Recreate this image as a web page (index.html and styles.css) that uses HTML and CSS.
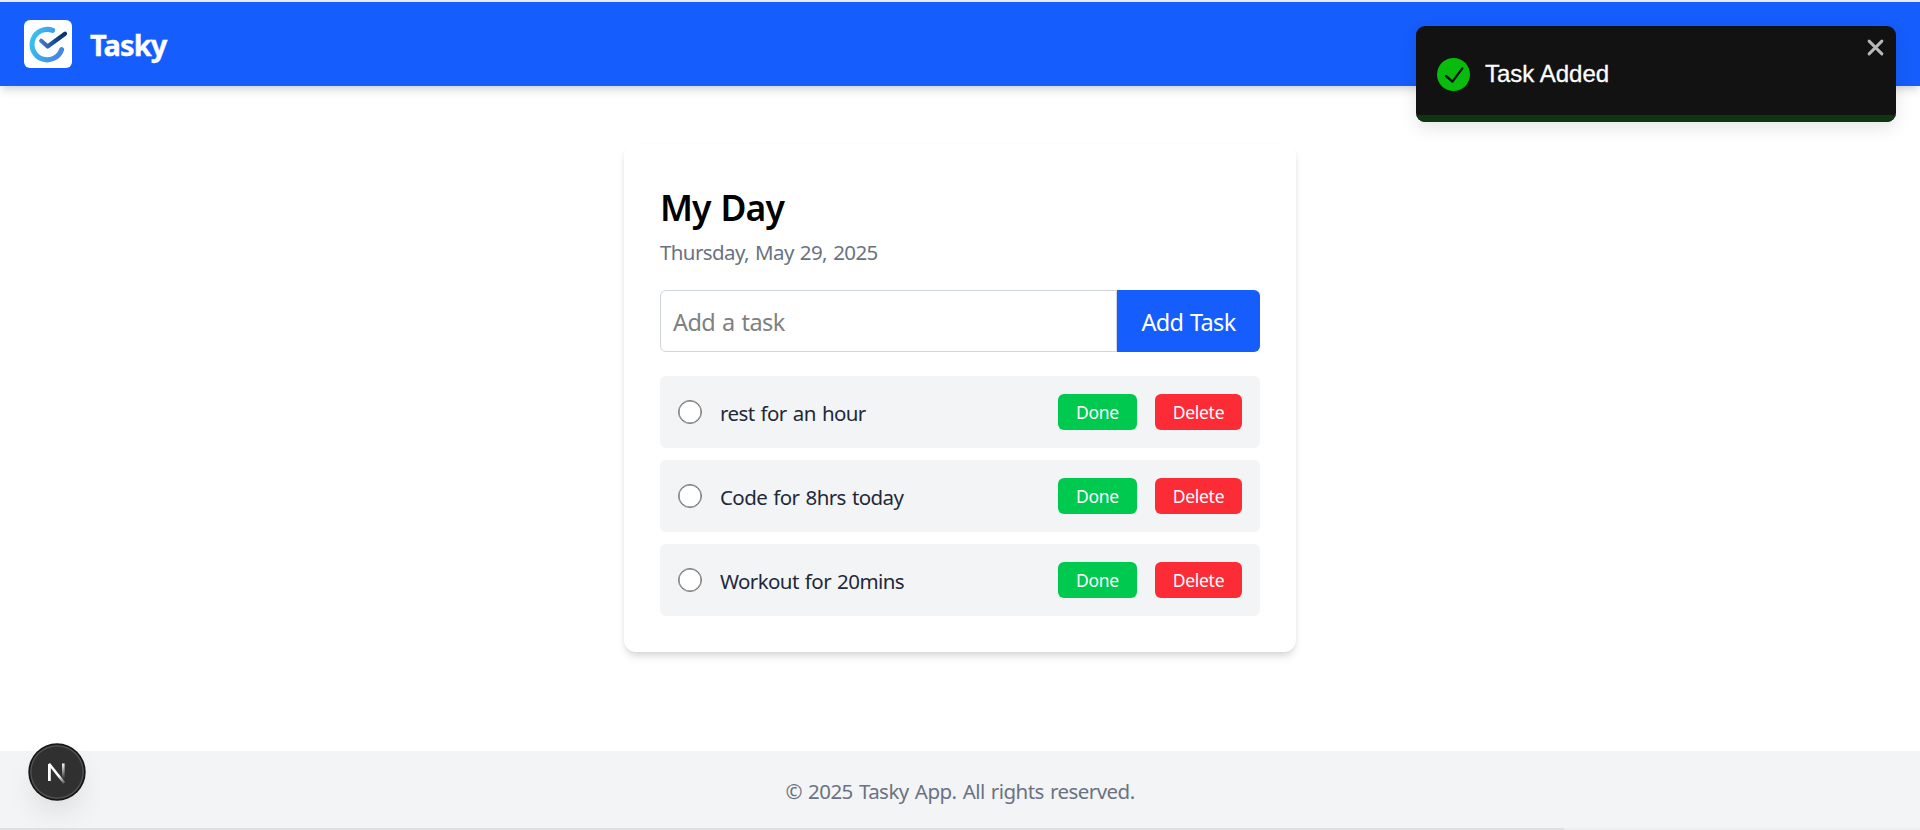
FILE: index.html
```html
<!DOCTYPE html>
<html lang="en">
<head>
<meta charset="utf-8">
<title>Tasky</title>
<link rel="stylesheet" href="styles.css">
</head>
<body>
<div class="page">
  <header class="header">
    <svg class="logo" viewBox="0 0 48 48" fill="none" stroke-linecap="round">
      <defs>
        <linearGradient id="ring" x1="5" y1="20" x2="40" y2="32" gradientUnits="userSpaceOnUse"><stop stop-color="#36c4f2"/><stop offset="1" stop-color="#4381e6"/></linearGradient>
        <linearGradient id="tick" x1="17" y1="22" x2="41" y2="15" gradientUnits="userSpaceOnUse"><stop stop-color="#4077d4"/><stop offset=".6" stop-color="#164684"/><stop offset="1" stop-color="#0c326a"/></linearGradient>
      </defs>
      <path d="M28.6 10.4A15.2 15.2 0 1 0 37.6 29.6" stroke="url(#ring)" stroke-width="5"/>
      <path d="M17.2 20.8L23.6 26.5L41 13.8" stroke="url(#tick)" stroke-width="4.2" stroke-linejoin="round"/>
    </svg>
    <h1 class="brand">Tasky</h1>
  </header>

  <main class="main">
    <section class="card">
      <h2 class="title">My Day</h2>
      <p class="date">Thursday, May 29, 2025</p>
      <div class="form">
        <input class="field" type="text" placeholder="Add a task">
        <button class="add">Add Task</button>
      </div>
      <ul class="list">
        <li class="task"><span class="radio"></span><span class="name">rest for an hour</span><button class="btn done">Done</button><button class="btn delete">Delete</button></li>
        <li class="task"><span class="radio"></span><span class="name">Code for 8hrs today</span><button class="btn done">Done</button><button class="btn delete">Delete</button></li>
        <li class="task"><span class="radio"></span><span class="name">Workout for 20mins</span><button class="btn done">Done</button><button class="btn delete">Delete</button></li>
      </ul>
    </section>
  </main>

  <footer class="footer"><p class="copy">© 2025 Tasky App. All rights reserved.</p></footer>
  <div class="scrollbar"><div class="thumb"></div></div>
</div>

<div class="toast">
  <div class="toast-body">
    <svg class="toast-icon" viewBox="0 0 33 33"><circle cx="16.5" cy="16.5" r="16.5" fill="#07bc0c"/><path d="M9 18L15.5 23.6L25.3 10.4" fill="none" stroke="#121212" stroke-width="2.4" stroke-linecap="round" stroke-linejoin="round"/></svg>
    <span class="toast-text">Task Added</span>
  </div>
  <svg class="toast-close" viewBox="0 0 16 16"><path d="M2 2L14 14M14 2L2 14" stroke="#b8b8b8" stroke-width="2.8" stroke-linecap="round"/></svg>
  <div class="progress"></div>
</div>

<div class="devtool">
  <svg class="n-icon" viewBox="0 0 20 24" fill="none">
    <defs>
      <linearGradient id="stem" x1="0" y1="2" x2="0" y2="18" gradientUnits="userSpaceOnUse"><stop stop-color="#fff"/><stop offset="1" stop-color="#fff" stop-opacity="0"/></linearGradient>
      <linearGradient id="diag" x1="12" y1="15" x2="17.5" y2="22.5" gradientUnits="userSpaceOnUse"><stop stop-color="#fff"/><stop offset="1" stop-color="#fff" stop-opacity=".15"/></linearGradient>
    </defs>
    <path d="M2.4 20V3" stroke="#fff" stroke-width="2.8"/>
    <path d="M2 2.8L17.3 22" stroke="url(#diag)" stroke-width="2.6"/>
    <path d="M16.3 2.5V18" stroke="url(#stem)" stroke-width="2.6"/>
  </svg>
</div>
</body>
</html>
```
FILE: styles.css
```css
* { box-sizing: border-box; margin: 0; padding: 0; }
body {
  font-family: "Segoe UI", "Noto Sans", "Open Sans", sans-serif;
  background: #fff;
  overflow: hidden;
}
.page { display: flex; flex-direction: column; height: 830px; border-top: 2px solid #e9ebf2; }
.header {
  display: flex; align-items: center; gap: 18px; flex: none;
  height: 84px; padding: 0 24px; background: #155dfc;
  box-shadow: 0 6px 9px -1px rgba(0,0,0,.1), 0 3px 6px -2px rgba(0,0,0,.1);
}
.logo { width: 48px; height: 48px; border-radius: 6px; background: #fff; }
.brand { padding-top: 2px; color: #fff; font-size: 29px; line-height: 42px; font-weight: 700; letter-spacing: -.9px; -webkit-text-stroke: .4px #fff; }
.main { flex: 1; display: flex; justify-content: center; align-items: flex-start; padding-top: 58px; }
.card {
  width: 672px; height: 508px; padding: 36px; border-radius: 12px; background: #fff;
  box-shadow: 0 6px 9px -1px rgba(0,0,0,.1), 0 3px 6px -2px rgba(0,0,0,.1);
}
.title { font-size: 35.5px; line-height: 54px; font-weight: 600; letter-spacing: -.9px; word-spacing: 1.5px; color: #000; }
.date { margin-top: 2px; font-size: 20.5px; line-height: 32px; letter-spacing: -.6px; word-spacing: 1.4px; color: #6a7282; }
.form { display: flex; height: 62px; margin-top: 22px; }
.field {
  width: 457px; padding: 2px 12px 0; border: 1px solid #d1d5dc; border-radius: 6px 0 0 6px;
  font: 23.5px "Segoe UI", "Noto Sans", sans-serif; letter-spacing: -.6px; word-spacing: 1.4px; outline: none;
}
.field::placeholder { color: #808080; }
.add {
  flex: 1; border: 0; border-radius: 0 6px 6px 0; background: #155dfc; color: #fff;
  padding-top: 2px; font: 23.5px "Segoe UI", "Noto Sans", sans-serif; letter-spacing: -.7px; word-spacing: 1.4px; white-space: nowrap;
}
.list { display: flex; flex-direction: column; gap: 12px; margin-top: 24px; list-style: none; }
.task { display: flex; align-items: center; height: 72px; padding: 0 18px; border-radius: 6px; background: #f3f4f6; }
.radio { width: 24px; height: 24px; border: 1px solid #767676; border-radius: 50%; background: #fff; box-shadow: inset 0 0 0 .5px #767676; }
.name { flex: 1; margin-left: 18px; padding-top: 2px; font-size: 20.5px; line-height: 32px; letter-spacing: -.6px; word-spacing: 1.4px; color: #1e2939; white-space: nowrap; }
.btn {
  height: 36px; border: 0; border-radius: 6px; color: #fff; padding-bottom: 1px;
  font: 17.5px "Segoe UI", "Noto Sans", sans-serif; letter-spacing: -.3px;
}
.done { width: 79px; margin-right: 18px; background: #00c950; }
.delete { width: 87px; background: #fb2c36; }
.footer { display: flex; align-items: center; justify-content: center; height: 77px; flex: none; padding-top: 3px; background: #f3f4f6; }
.copy { font-size: 20.5px; line-height: 32px; letter-spacing: -.55px; word-spacing: 1.4px; color: #6a7282; white-space: nowrap; }
.scrollbar { height: 2px; flex: none; background: #efefef; }
.thumb { width: 1564px; height: 2px; background: #e0e0e0; }
.toast {
  position: absolute; left: 1416px; top: 26px; width: 480px; height: 96px;
  border-radius: 9px; background: #121212; overflow: hidden;
  box-shadow: 0 6px 18px rgba(0,0,0,.1);
}
.toast-body { display: flex; align-items: center; gap: 15px; height: 96px; padding: 0 21px; }
.toast-icon { width: 33px; height: 33px; }
.toast-text { color: #fff; font: 24px "Liberation Sans", Arial, sans-serif; -webkit-text-stroke: .3px #fff; }
.toast-close { position: absolute; right: 12px; top: 13px; width: 17px; height: 17px; }
.progress { position: absolute; left: 0; bottom: 0; width: 100%; height: 7px; background: #103511; }
.devtool {
  position: absolute; left: 29px; top: 744px; width: 56px; height: 56px; border-radius: 50%;
  display: flex; align-items: center; justify-content: center;
  background: #303030; border: 1px solid #171717;
  box-shadow: inset 0 0 0 1.5px #515151, 0 0 0 .7px #171717, 0 16px 32px -8px rgba(0,0,0,.14);
}
.n-icon { width: 20px; height: 24px; margin-top: 1px; }
```
